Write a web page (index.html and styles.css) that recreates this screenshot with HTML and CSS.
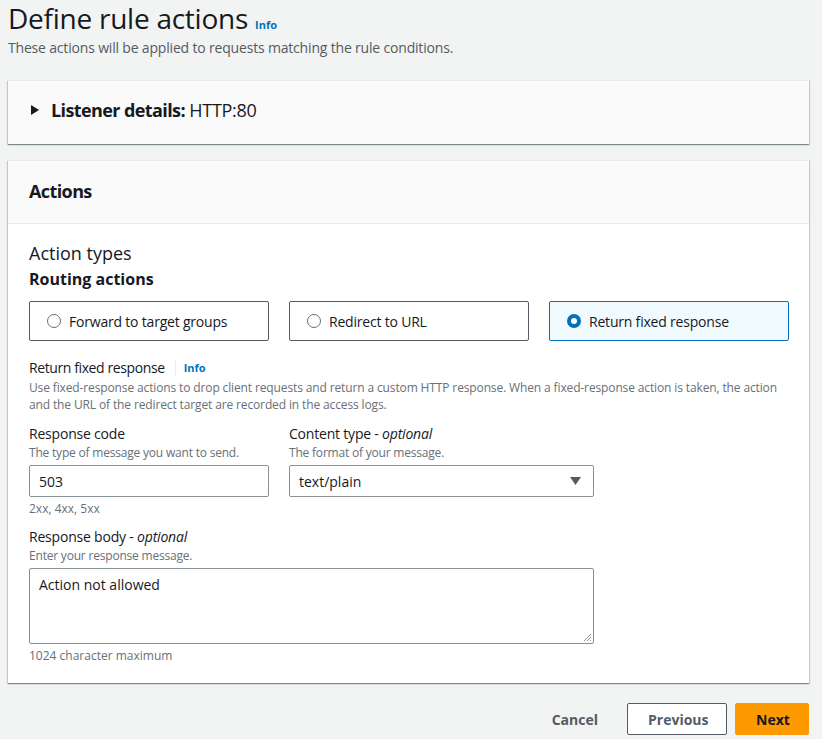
FILE: index.html
```html
<!DOCTYPE html>
<html>
<head>
<meta charset="utf-8">
<link rel="stylesheet" href="styles.css">
</head>
<body>
<div class="page">
  <header class="page-head">
    <h1 class="title">Define rule actions <a class="info info-title">Info</a></h1>
    <p class="subtitle">These actions will be applied to requests matching the rule conditions.</p>
  </header>

  <section class="card card-listener">
    <div class="expander">
      <svg class="caret" width="8" height="10" viewBox="0 0 8 10"><path d="M0 0 L8 5 L0 10 Z" fill="#16191f"/></svg>
      <span class="exp-title"><b>Listener details:</b> HTTP:80</span>
    </div>
  </section>

  <section class="card card-actions">
    <div class="card-header"><h2>Actions</h2></div>
    <div class="card-body">
      <div class="at-title">Action types</div>
      <div class="ra-title">Routing actions</div>
      <div class="tiles">
        <label class="tile"><span class="radio"></span>Forward to target groups</label>
        <label class="tile"><span class="radio"></span>Redirect to URL</label>
        <label class="tile tile-on"><span class="radio radio-on"></span>Return fixed response</label>
      </div>

      <div class="section-label">Return fixed response <span class="sep"></span><a class="info">Info</a></div>
      <p class="desc">Use fixed-response actions to drop client requests and return a custom HTTP response. When a fixed-response action is taken, the action and the URL of the redirect target are recorded in the access logs.</p>

      <div class="row">
        <div class="field f-code">
          <div class="lbl">Response code</div>
          <div class="hint">The type of message you want to send.</div>
          <div class="input">503</div>
          <div class="constraint">2xx, 4xx, 5xx</div>
        </div>
        <div class="field f-type">
          <div class="lbl">Content type - <i>optional</i></div>
          <div class="hint">The format of your message.</div>
          <div class="input select">text/plain
            <svg class="dd" width="11" height="8" viewBox="0 0 11 8"><path d="M0 0 H11 L5.5 8 Z" fill="#545b64"/></svg>
          </div>
        </div>
      </div>

      <div class="field f-body">
        <div class="lbl">Response body - <i>optional</i></div>
        <div class="hint">Enter your response message.</div>
        <div class="input textarea">Action not allowed
          <svg class="grip" width="9" height="9" viewBox="0 0 9 9"><path d="M8 1 L1 8 M8 4 L4 8 M8 7 L7 8" stroke="#879196" stroke-width="1"/></svg>
        </div>
        <div class="constraint">1024 character maximum</div>
      </div>
    </div>
  </section>

  <footer class="actions">
    <button class="btn btn-link">Cancel</button>
    <button class="btn btn-normal">Previous</button>
    <button class="btn btn-primary">Next</button>
  </footer>
</div>
</body>
</html>
```

FILE: styles.css
```css
* { box-sizing: border-box; }
html, body { margin: 0; padding: 0; }
body {
  background: #f2f3f3;
  font-family: "Open Sans", "Noto Sans", sans-serif;
  color: #16191f;
  height: 739px;
  overflow: hidden;
}
.page {
  width: 801px;
  margin-left: 8px;
  padding-top: 2px;
}
.title {
  margin: 0;
  font-size: 28px;
  font-weight: 400;
  line-height: 32px;
  height: 32px;
  letter-spacing: -0.25px;
}
.info {
  color: #0073bb;
  font-size: 11px;
  font-weight: 700;
  letter-spacing: 0;
}
.info-title { margin-left: 0; }
.subtitle {
  margin: 4px 0 0;
  font-size: 14px;
  line-height: 20px;
  color: #545b64;
  letter-spacing: -0.18px;
}
.card {
  background: #fff;
  box-shadow: 0 1px 1px 0 rgba(0,28,36,.3), 1px 1px 1px 0 rgba(0,28,36,.15), -1px 1px 1px 0 rgba(0,28,36,.15);
  border-top: 1px solid #eaeded;
}
.card-listener {
  margin-top: 22px;
  height: 64px;
  background: #fafafa;
}
.expander {
  display: flex;
  align-items: center;
  height: 62px;
  padding-left: 23px;
  padding-bottom: 4px;
}
.caret { margin-right: 12px; }
.exp-title {
  font-size: 18px;
  line-height: 22px;
  letter-spacing: -0.3px;
}
.exp-title b { font-weight: 700; letter-spacing: -0.6px; }
.card-actions {
  margin-top: 16px;
}
.card-header {
  height: 63px;
  background: #fafafa;
  border-bottom: 1px solid #eaeded;
  display: flex;
  align-items: center;
  padding-left: 21px;
  padding-bottom: 2px;
}
.card-header h2 {
  margin: 0;
  font-size: 18px;
  font-weight: 700;
  letter-spacing: -0.6px;
}
.card-body {
  padding: 17px 20px 19px 21px;
}
.at-title {
  font-size: 18px;
  line-height: 24px;
}
.ra-title {
  font-size: 16px;
  font-weight: 700;
  line-height: 22px;
  margin-top: 3px;
}
.tiles {
  display: flex;
  gap: 20px;
  margin-top: 11px;
}
.tile {
  width: 240px;
  height: 40px;
  border: 1px solid #545b64;
  border-radius: 2px;
  display: flex;
  align-items: center;
  padding-left: 17px;
  font-size: 14px;
  color: #16191f;
  letter-spacing: -0.2px;
}
.tile-on {
  background: #f1faff;
  border-color: #0073bb;
}
.radio {
  width: 14px;
  height: 14px;
  border-radius: 50%;
  border: 1px solid #687078;
  margin-right: 8px;
  flex: none;
}
.radio-on {
  border: 4px solid #0073bb;
  background: #fff;
}
.section-label {
  margin-top: 18px;
  font-size: 14px;
  line-height: 18px;
  display: flex;
  align-items: center;
  letter-spacing: -0.4px;
}
.sep {
  display: inline-block;
  width: 1px;
  height: 18px;
  background: #eaeded;
  margin: 0 8px 0 10px;
}
.desc {
  margin: 2px 0 0;
  font-size: 12px;
  line-height: 17px;
  color: #687078;
  letter-spacing: -0.13px;
}
.row {
  display: flex;
  gap: 20px;
  margin-top: 11px;
}
.field .lbl {
  font-size: 14px;
  line-height: 20px;
  letter-spacing: -0.2px;
}
.field .lbl i { font-style: italic; }
.hint {
  font-size: 12px;
  line-height: 16px;
  color: #687078;
  margin-top: 1px;
  letter-spacing: -0.2px;
}
.input {
  margin-top: 4px;
  border: 1px solid #879196;
  border-radius: 2px;
  height: 32px;
  padding: 0 9px;
  font-size: 14px;
  display: flex;
  align-items: center;
  position: relative;
  background: #fff;
}
.f-code { width: 240px; }
.f-type { width: 305px; }
.select .dd {
  position: absolute;
  right: 12px;
  top: 11px;
}
.constraint {
  font-size: 12px;
  line-height: 16px;
  color: #687078;
  margin-top: 4px;
}
.f-body { width: 565px; margin-top: 10px; }
.textarea {
  height: 76px;
  align-items: flex-start;
  padding-top: 6px;
}
.grip {
  position: absolute;
  right: 1px;
  bottom: 1px;
}
.actions {
  display: flex;
  justify-content: flex-end;
  align-items: center;
  margin-top: 20px;
}
.btn {
  font-family: inherit;
  font-size: 14px;
  font-weight: 700;
  height: 32px;
  border-radius: 2px;
  padding: 0 20px;
  cursor: pointer;
}
.btn-link {
  background: none;
  border: none;
  color: #545b64;
  margin-right: 9px;
}
.btn-normal {
  background: #fff;
  border: 1px solid #545b64;
  color: #545b64;
  width: 100px;
  margin-right: 8px;
}
.btn-primary {
  background: #ff9900;
  border: 1px solid #ff9900;
  color: #16191f;
  width: 74px;
}
```
